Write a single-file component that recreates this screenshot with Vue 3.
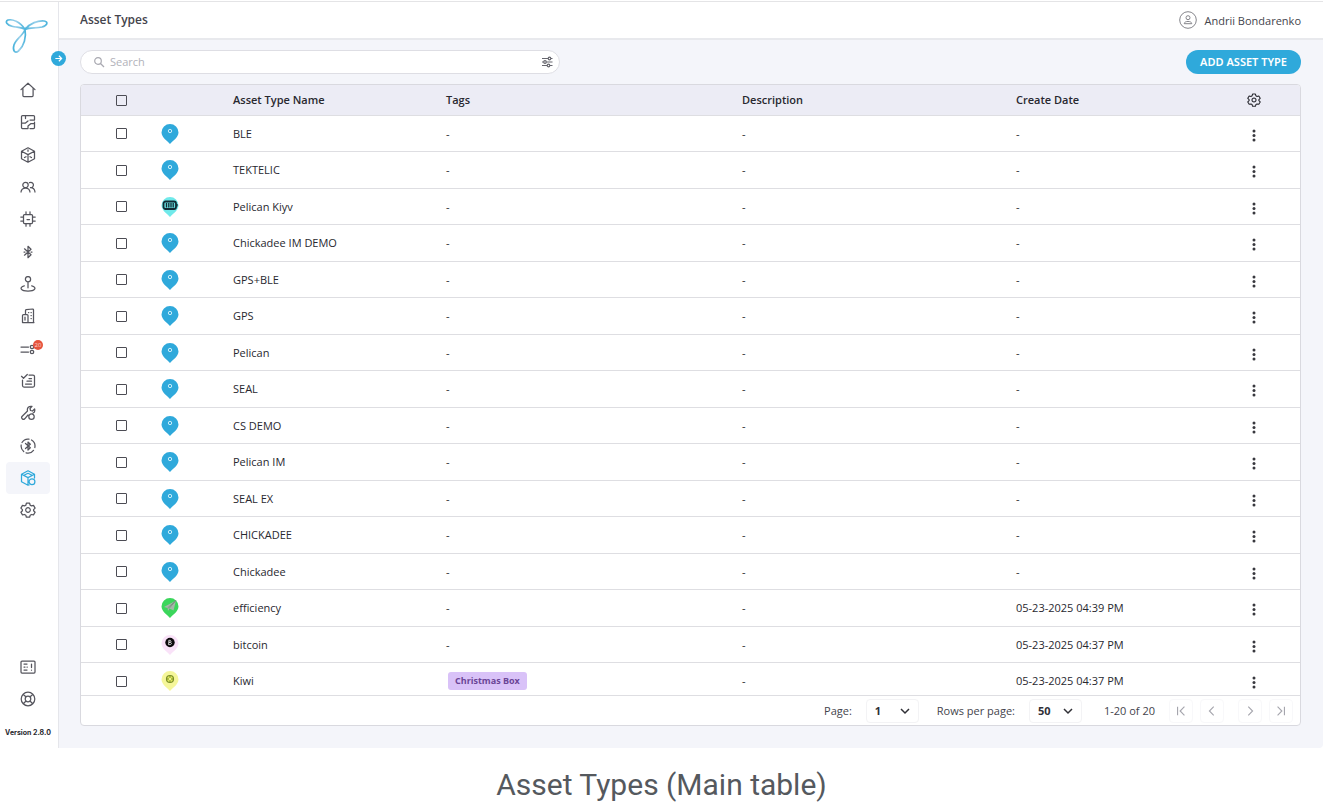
<script setup>
import { ref } from 'vue'

const dot = (x, y, r) => `M${x - r} ${y}a${r} ${r} 0 1 0 ${2 * r} 0a${r} ${r} 0 1 0 ${-2 * r} 0`
const gear = 'M6.4 1.2h3.2l.6 2 1.3.7 2-.5 1.6 2.7-1.5 1.5v1.2l1.5 1.4-1.6 2.7-2-.4-1.3.7-.6 2H6.4l-.6-2-1.3-.7-2 .4L.9 10.200l1.500-1.400V7.600L.9 6.100l1.600-2.700 2 .5 1.300-.7z' + dot(8, 8, 2.3)

const navItems = [
  { label: 'Home', d: 'M1 7.600L8 1.200l7 6.400M2.900 6.300v7.200q0 1 1 1h8.200q1 0 1-1V6.300' },
  { label: 'Floor plans', d: 'M5.500 1.500h8q1 0 1 1V6H10M14.500 8v5.500q0 1-1 1H10M7.500 14.500h-5q-1 0-1-1v-11q0-1 1-1h3v3M1.500 9h4l2.500-2M14.500 9.500h-3.500L8 12v2.500' },
  { label: 'Assets', d: 'M8 .8l6.500 3.500v7.400L8 15.200l-6.500-3.500V4.300zM1.500 4.300L8 7.600l6.500-3.300M8 7.600v7.600M4.500 10.500l1.500-.8M10 9.700l1.500.8M8 2.800v1.500' },
  { label: 'Users', d: dot(5.5, 6, 2.7) + 'M1 13c.3-2.600 2-4 4.500-4s4.200 1.400 4.500 4M9.500 3.600a2.700 2.700 0 1 1 1 5.100c2.500 0 4.200 1.700 4.500 4.300' },
  { label: 'Devices', d: 'M4.500 3.500h7q1 0 1 1v7q0 1-1 1h-7q-1 0-1-1v-7q0-1 1-1M6 .8v2.700M10 .8v2.700M6 12.500v2.700M10 12.500v2.700M.8 6h2.700M.8 10h2.700M12.500 6h2.700M12.500 10h2.700M7 8.500h2.500' },
  { label: 'Bluetooth', d: 'M4.500 4.800l6.500 6L8 13.700V2.300L11 5.200l-6.500 6M4 8h1M11 8h1' },
  { label: 'Locations', d: dot(8, 3.2, 2.6) + 'M8 5.800v6M4.300 9.800C-1.500 11.500 1 15 8 15s9.500-3.500 3.700-5.200' },
  { label: 'Buildings', d: 'M5.500 6.500v-4q0-.7.700-.8l6.500-.7q.8 0 .8.800v12.700H2.500V7.500q0-1 1-1h3.500q1 0 1 1v7M5 9v3M8.500 4.500h.3M11 4.500h.3M11 7.500h.3M11 10.500h.3M3 14.500h11' },
  { label: 'Alerts', badge: '20', d: 'M1 6h7.500M1 11h7.500' + dot(12, 6, 1.7) + dot(12, 11, 1.7) },
  { label: 'Reports', d: 'M9 2h4q1.500 0 1.500 1.500v9q0 1.500-1.500 1.500H4q-1.500 0-1.500-1.500V7M1.500 3.300L3.500 5.300l3.800-3.800M9 5.500h2.500M7 8.200h4.500M5.500 11h6' },
  { label: 'Maintenance', d: 'M8 10l-3.300 3.800a1.700 1.700 0 0 1-2.500-2.500L7.500 6C6.700 3 9 .7 12 1.400L10 3.500l.5 2 2 .5L14.600 4c.5 2-.2 3.500-1.500 4' + dot(11.5, 11.7, 2.7) },
  { label: 'Bluetooth gateways', d: 'M2 4.500A7 7 0 0 1 9 1.100M11.500 2A7 7 0 0 1 14.800 9.500M13.500 12.300A7 7 0 0 1 6 14.800M3.700 13.500A7 7 0 0 1 1.200 7M5.500 5.500l4.800 4.300L8 12V4L10.300 6.200 5.500 10.500' },
  { label: 'Asset types', active: true, d: 'M9 15l-1 .2-6.500-3.500V4.300L8 .8l6.500 3.500V8M1.500 4.300L8 7.600l6.500-3.300M8 7.600v7.600M4.500 5L8 3.300l3.500 1.700' + dot(12, 11.7, 2.9) },
  { label: 'Settings', d: gear }
]
const helpItems = [
  { label: 'Release notes', d: 'M2 2h12q1 0 1 1v10q0 1-1 1H2q-1 0-1-1V3q0-1 1-1M4 5h3M4 8h1M7 8h.3M4 11h3M11.500 5v3.500M11.500 11v.2' },
  { label: 'Support', d: dot(8, 8, 6.8) + dot(8, 8, 2.8) + 'M3.300 3.300l2.700 2.700M12.700 3.300L10 6M3.300 12.700L6 10M12.700 12.700L10 10' }
]

const names = ['BLE', 'TEKTELIC', 'Pelican Kiyv', 'Chickadee IM DEMO', 'GPS+BLE', 'GPS', 'Pelican', 'SEAL', 'CS DEMO', 'Pelican IM', 'SEAL EX', 'CHICKADEE', 'Chickadee', 'efficiency', 'bitcoin', 'Kiwi']
const extras = {
  'Pelican Kiyv': { kind: 'battery' },
  efficiency: { kind: 'plane', date: '05-23-2025 04:39 PM' },
  bitcoin: { kind: 'coin', date: '05-23-2025 04:37 PM' },
  Kiwi: { kind: 'kiwi', date: '05-23-2025 04:37 PM', tag: 'Christmas Box' }
}
const rows = names.map((name) => ({ name, kind: 'pin', ...extras[name] }))

const pagers = [
  { label: 'First page', d: 'M3 2v10M11 2L6 7l5 5' },
  { label: 'Previous page', d: 'M9 2L4 7l5 5' },
  { label: 'Next page', d: 'M5 2l5 5-5 5' },
  { label: 'Last page', d: 'M3 2l5 5-5 5M11 2v10' }
]
const search = ref('')
</script>

<template>
  <figure class="page">
    <div class="app">
      <aside class="sidebar">
        <a class="logo" href="#" aria-label="Tektelic">
          <svg viewBox="0 0 44 38">
            <defs>
              <linearGradient id="wing" x1="0" x2="1"><stop offset="0" stop-color="#4bb4dc" /><stop offset=".5" stop-color="#9bd0ea" /><stop offset="1" stop-color="#4bb4dc" /></linearGradient>
            </defs>
            <g fill="none" stroke="url(#wing)" stroke-width="1.7">
              <path d="M20 12.500C15 4 7 2 3 3C-.5 4.500 2 8 7 9.300C12 10.500 17 10 20 12.500z" />
              <path d="M20 12.500C25 6 33 3.500 39 4C44 5 42 8.500 37 10C31 11.500 25 10 20 12.500z" />
              <path d="M20 12.500C21.500 20 19 29 13.500 34C9.500 37 7.500 33 9 28C11 22 17.500 19 20 12.500z" />
            </g>
          </svg>
        </a>
        <button class="expand" aria-label="Expand menu">
          <svg viewBox="0 0 14 14"><path d="M3 7h8M7.500 3.500L11 7l-3.500 3.500" /></svg>
        </button>
        <nav class="nav">
          <a v-for="item in navItems" :key="item.label" href="#" :aria-label="item.label" :class="{ active: item.active }">
            <svg class="icon" viewBox="0 0 16 16"><path :d="item.d" /></svg>
            <span v-if="item.badge" class="badge">{{ item.badge }}</span>
          </a>
        </nav>
        <nav class="nav help">
          <a v-for="item in helpItems" :key="item.label" href="#" :aria-label="item.label">
            <svg class="icon" viewBox="0 0 16 16"><path :d="item.d" /></svg>
          </a>
        </nav>
        <p class="version">Version 2.8.0</p>
      </aside>

      <div class="main">
        <header class="topbar">
          <h1>Asset Types</h1>
          <button class="user">
            <svg viewBox="0 0 18 18"><circle cx="9" cy="9" r="8.300" /><circle cx="9" cy="6.700" r="2" /><path d="M5.200 12.700c0-3 7.600-3 7.600 0z" /></svg>
            Andrii Bondarenko
          </button>
        </header>

        <div class="content">
          <div class="toolbar">
            <div class="search">
              <svg viewBox="0 0 12 12"><circle cx="5" cy="5" r="3.300" /><path d="M7.500 7.500L11 11" /></svg>
              <input v-model="search" type="text" placeholder="Search" aria-label="Search">
              <button aria-label="Filters">
                <svg viewBox="0 0 12 12"><path d="M1 2.500h6M10 2.500h1.500M1 6h1.500M5.500 6h6M1 9.500h5M9 9.500h2.500" /><circle cx="8.500" cy="2.500" r="1.300" /><circle cx="4" cy="6" r="1.300" /><circle cx="7.500" cy="9.500" r="1.300" /></svg>
              </button>
            </div>
            <button class="add">ADD ASSET TYPE</button>
          </div>

          <div class="card">
            <div class="scroll">
              <table>
                <colgroup><col class="c-check"><col class="c-icon"><col class="c-name"><col class="c-tags"><col class="c-desc"><col class="c-date"><col class="c-menu"></colgroup>
                <thead>
                  <tr>
                    <th class="center"><input type="checkbox" aria-label="Select all"></th>
                    <th></th>
                    <th>Asset Type Name</th>
                    <th>Tags</th>
                    <th>Description</th>
                    <th>Create Date</th>
                    <th class="center"><button class="more" aria-label="Table settings"><svg class="icon cog" viewBox="0 0 16 16"><path :d="gear" /></svg></button></th>
                  </tr>
                </thead>
                <tbody>
                  <tr v-for="row in rows" :key="row.name">
                    <td class="center"><input type="checkbox" :aria-label="'Select ' + row.name"></td>
                    <td>
                      <svg class="pin" :class="row.kind" viewBox="0 0 18 20">
                        <path class="drop" d="M9 20C7 17.500.5 13.500.5 8.500a8.500 8.500 0 0 1 17 0C17.500 13.500 11 17.500 9 20z" />
                        <circle v-if="row.kind === 'pin'" cx="9" cy="7" r="1.700" fill="none" stroke="#c9edfa" />
                        <template v-else-if="row.kind === 'battery'">
                          <rect x="2.500" y="4.500" width="12.500" height="7.500" rx="2" fill="#65dfe0" stroke="#122c34" stroke-width="1.800" />
                          <path d="M5.500 6v4.500M7.800 6v4.500M10 6v4.500M12.200 6v4.500M16 7v2.500" stroke="#122c34" stroke-width="1.300" />
                        </template>
                        <template v-else-if="row.kind === 'plane'">
                          <path d="M3 9L15 2.500 12.500 12.500 8.500 10.500 7 13 6.500 10z" fill="#a4b7a8" /><path d="M6.500 10L15 2.500 8 10.500" stroke="#708776" stroke-width=".7" fill="none" />
                        </template>
                        <template v-else-if="row.kind === 'coin'">
                          <circle cx="9" cy="7.500" r="4.700" fill="#0b090b" /><path d="M7.800 5.300h1.500q1.500 1 0 2h-1.500zM7.800 7.300h1.800q1.700 1.200 0 2.300H7.500z" fill="none" stroke="#eee" stroke-width=".8" />
                        </template>
                        <template v-else>
                          <circle cx="9" cy="8" r="3.500" fill="#e0e858" stroke="#7a8d29" stroke-width="1.200" /><path d="M9 5v6M6 8h6" stroke="#7a8d29" /><circle cx="9" cy="8" r="1.200" fill="#eef58d" />
                        </template>
                      </svg>
                    </td>
                    <td>{{ row.name }}</td>
                    <td><span v-if="row.tag" class="tag">{{ row.tag }}</span><template v-else>-</template></td>
                    <td>-</td>
                    <td>{{ row.date || '-' }}</td>
                    <td class="center"><button class="more" :aria-label="'Actions for ' + row.name"><svg class="dots" viewBox="0 0 4 16"><circle cx="2" cy="5" r="1.500" /><circle cx="2" cy="9.500" r="1.500" /><circle cx="2" cy="14" r="1.500" /></svg></button></td>
                  </tr>
                </tbody>
              </table>
            </div>
            <footer class="pagination">
              <label for="page-number">Page:</label>
              <div class="select"><select id="page-number"><option>1</option></select><svg viewBox="0 0 10 10"><path d="M1 3l4 4 4-4" /></svg></div>
              <label for="page-size" class="size-label">Rows per page:</label>
              <div class="select"><select id="page-size"><option>50</option></select><svg viewBox="0 0 10 10"><path d="M1 3l4 4 4-4" /></svg></div>
              <span class="range">1-20 of 20</span>
              <div class="pagers">
                <button v-for="p in pagers" :key="p.label" :aria-label="p.label" disabled><svg viewBox="0 0 14 14"><path :d="p.d" /></svg></button>
              </div>
            </footer>
          </div>
        </div>
      </div>
    </div>
    <figcaption>Asset Types (Main table)</figcaption>
  </figure>
</template>

<style>
body { margin: 0; background: #fff; }
</style>

<style scoped>
* { box-sizing: border-box; }
.page { margin: 0; height: 100vh; display: flex; flex-direction: column; font-family: "Open Sans", "Noto Sans", sans-serif; font-size: 11px; color: #44444c; }
button { font: inherit; color: inherit; background: none; border: 0; padding: 0; cursor: pointer; }
svg { display: block; fill: none; }
.app { flex: 1; min-height: 0; display: flex; margin-top: 1px; border-top: 1px solid #e4e4e6; background: #f4f5fa; border-bottom-right-radius: 4px; overflow: hidden; }

.sidebar { position: relative; width: 59px; flex: none; display: flex; flex-direction: column; align-items: center; background: #fff; border-right: 1px solid #e5e6eb; }
.logo { width: 44px; margin: 15px 4px 0 0; height: 57px; }
.logo svg { width: 44px; height: 38px; }
.expand { position: absolute; top: 49px; right: -8px; width: 15px; height: 15px; border-radius: 50%; background: #2fa9db; display: grid; place-items: center; z-index: 1; }
.expand svg { width: 11px; height: 11px; stroke: #fff; stroke-width: 1.500; }
.nav { width: 44px; margin-right: 2px; }
.nav a { position: relative; height: 32px; display: grid; place-items: center; border-radius: 4px; color: #55555d; }
.nav a:nth-child(3n) { height: 33px; }
.nav a.active { background: #f4f5fa; color: #2fa9db; }
.icon { width: 16px; height: 16px; stroke: currentColor; stroke-width: 1.250; stroke-linejoin: round; stroke-linecap: round; }
.badge { position: absolute; top: 8px; right: 7px; width: 10px; height: 10px; border-radius: 5px; background: #e5533d; color: #fbd5ce; font-size: 6px; line-height: 10px; text-align: center; }
.help { margin-top: auto; }
.version { margin: 13px 2px 10px 0; font-family: "Inter", sans-serif; font-size: 7px; line-height: 10px; font-weight: 700; white-space: nowrap; color: #28282e; }

.main { flex: 1; min-width: 0; display: flex; flex-direction: column; }
.topbar { height: 38px; flex: none; display: flex; align-items: center; justify-content: space-between; padding: 0 22px 0 21px; background: #fff; border-bottom: 2px solid #e8e9ed; }
h1 { margin: 0; font-size: 12px; font-weight: 600; line-height: 16px; }
.user { display: flex; align-items: center; gap: 8px; font-weight: 500; }
.user svg { width: 18px; height: 18px; stroke: #85858b; }
.content { flex: 1; min-height: 0; display: flex; flex-direction: column; gap: 10px; padding: 10px 22px 22px 21px; }
.toolbar { display: flex; justify-content: space-between; align-items: center; flex: none; }
.search { width: 480px; height: 24px; display: flex; align-items: center; gap: 5px; padding: 0 6px 0 12px; background: #fff; border: 1px solid #dedee4; border-radius: 12px; }
.search svg { width: 12px; height: 12px; flex: none; stroke: #a9a9b1; stroke-width: 1.200; }
.search input { flex: 1; min-width: 0; padding: 0 0 2px; border: 0; outline: 0; background: none; font: inherit; }
.search input::placeholder { color: #b2b2ba; opacity: 1; }
.search button svg { stroke: #66666e; }
.add { height: 24px; padding: 0 14px; border-radius: 12px; background: #2fa9db; color: #fff; font-family: "Noto Sans", sans-serif; font-size: 11px; line-height: 24px; font-weight: 600; }

.card { flex: 1; min-height: 0; display: flex; flex-direction: column; background: #fff; border: 1px solid #d9d9df; border-radius: 4px; overflow: hidden; }
.scroll { flex: 1; min-height: 0; overflow: hidden; }
table { width: 100%; table-layout: fixed; border-collapse: separate; border-spacing: 0; }
.c-check { width: 80px; } .c-icon { width: 64px; } .c-name { width: 213px; } .c-tags { width: 296px; } .c-desc { width: 274px; } .c-date { width: 200px; } .c-menu { width: 92px; }
th, td { padding: 0 8px; text-align: left; border-bottom: 1px solid #dedee2; line-height: 16px; }
th { height: 31px; background: #ececf5; font-weight: 600; color: #28282f; }
td { height: 36px; font-weight: 500; color: #28282f; }
tr:nth-child(even) td { height: 37px; }
th:nth-child(2), td:nth-child(2) { padding: 0; }
.center { text-align: center; }
input[type="checkbox"] { appearance: none; display: block; width: 11px; height: 11px; margin: 0 auto; border: 1px solid #4c4c54; border-radius: 1px; background: #fff; }
th input[type="checkbox"] { background: transparent; }
.more { display: block; margin: 0 auto; }
.cog { width: 14px; height: 14px; }
.dots { width: 4px; height: 16px; fill: #38383e; }
.pin { width: 18px; height: 20px; }
.drop { fill: #2fa9db; }
.battery .drop { fill: #70e9ea; }
.plane .drop { fill: #3bd65b; }
.coin .drop { fill: #f9e2f8; }
.kiwi .drop { fill: #f5f69a; }
.tag { display: inline-block; height: 18px; margin-left: 2px; padding: 0 7px; border-radius: 3px; background: #d9c2f8; color: #6b4596; font-size: 9px; font-weight: 700; line-height: 18px; }

.pagination { height: 30px; flex: none; display: flex; align-items: center; justify-content: flex-end; padding-right: 7px; border-top: 1px solid #dedee2; font-weight: 500; }
.select { position: relative; width: 53px; height: 24px; margin-left: 14px; border: 1px solid #f3f3f5; border-radius: 4px; }
.select select { appearance: none; width: 100%; height: 100%; padding: 0 8px; border: 0; background: none; font: inherit; font-weight: 700; color: #303036; }
.select svg { position: absolute; right: 8px; top: 6px; width: 10px; height: 10px; stroke: #303036; stroke-width: 1.500; pointer-events: none; }
.size-label { margin-left: 18px; }
.range { margin-left: 22px; }
.pagers { display: flex; gap: 7px; margin-left: 14px; }
.pagers button { width: 24px; height: 24px; display: grid; place-items: center; border: 1px solid #f8f8fa; border-radius: 4px; }
.pagers svg { width: 12px; height: 12px; stroke: #a5a5ad; stroke-width: 1.300; }
.pagers button:nth-child(3) { margin-left: 7px; }
figcaption { height: 57px; flex: none; padding-top: 18px; font-family: "Roboto", sans-serif; font-size: 30px; line-height: 38px; text-align: center; color: #55595e; }
</style>
